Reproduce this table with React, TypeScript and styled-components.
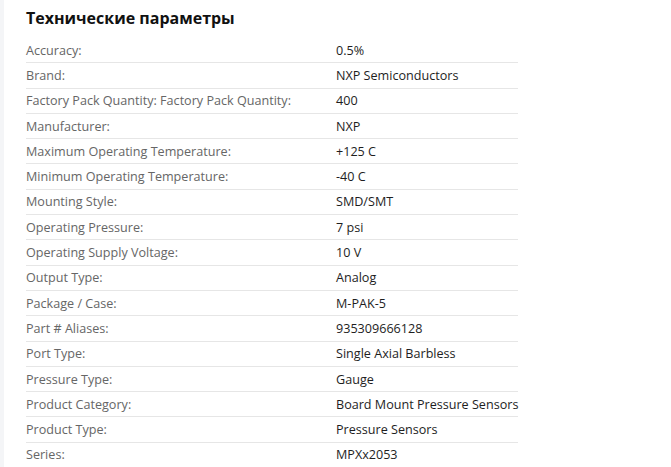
import React from 'react'
import styled, { createGlobalStyle } from 'styled-components'

const GlobalStyle = createGlobalStyle`
    html, body {
        margin: 0;
        padding: 0;
        background: #fff;
    }
    body {
        font-family: 'Open Sans', 'Noto Sans', sans-serif;
    }
`

const Page = styled.div`
    min-height: 467px;
    border-left: 4px solid #f4f5f7;
    padding: 6px 0 0 22px;
    box-sizing: border-box;
`

const Title = styled.h2`
    margin: 0 0 8px;
    font-size: 16px;
    line-height: 24px;
    font-weight: 700;
    color: #111;
`

const Table = styled.div`
    width: 492px;
    display: flex;
    flex-direction: column;
`

const Row = styled.div`
    display: grid;
    grid-template-columns: 310px 1fr;
    height: 25.3px;
    align-items: center;
    border-bottom: 1px solid #e6e6e6;
    box-sizing: border-box;
    font-size: 12.6px;
    white-space: nowrap;
`

const Label = styled.span`
    color: #666;
`

const Value = styled.span`
    color: #1e1e1e;
`

const specs: [string, string][] = [
    ['Accuracy:', '0.5%'],
    ['Brand:', 'NXP Semiconductors'],
    ['Factory Pack Quantity: Factory Pack Quantity:', '400'],
    ['Manufacturer:', 'NXP'],
    ['Maximum Operating Temperature:', '+125 C'],
    ['Minimum Operating Temperature:', '-40 C'],
    ['Mounting Style:', 'SMD/SMT'],
    ['Operating Pressure:', '7 psi'],
    ['Operating Supply Voltage:', '10 V'],
    ['Output Type:', 'Analog'],
    ['Package / Case:', 'M-PAK-5'],
    ['Part # Aliases:', '935309666128'],
    ['Port Type:', 'Single Axial Barbless'],
    ['Pressure Type:', 'Gauge'],
    ['Product Category:', 'Board Mount Pressure Sensors'],
    ['Product Type:', 'Pressure Sensors'],
    ['Series:', 'MPXx2053'],
]

export default function App(): React.ReactElement {
    return (
        <>
            <GlobalStyle />
            <Page>
                <Title>Технические параметры</Title>
                <Table>
                    {specs.map(([label, value]) => (
                        <Row key={label}>
                            <Label>{label}</Label>
                            <Value>{value}</Value>
                        </Row>
                    ))}
                </Table>
            </Page>
        </>
    )
}
